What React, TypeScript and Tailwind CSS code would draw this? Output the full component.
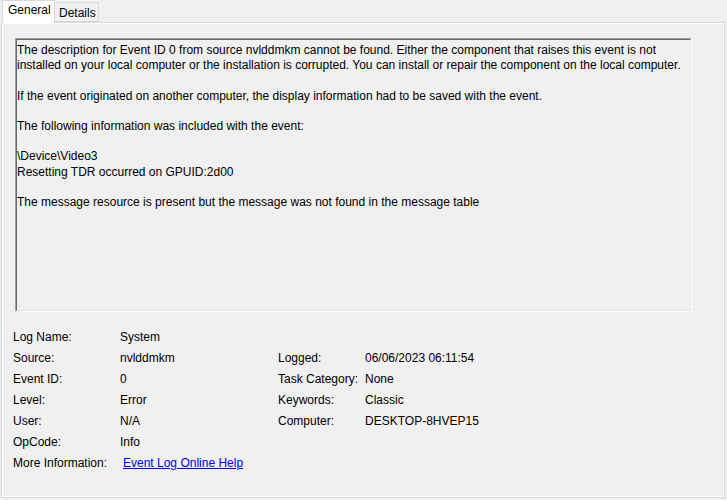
import React from 'react'

const font = { fontFamily: '"Segoe UI", "Liberation Sans", Arial, sans-serif' }

const messageLines = [
	'The description for Event ID 0 from source nvlddmkm cannot be found. Either the component that raises this event is not',
	'installed on your local computer or the installation is corrupted. You can install or repair the component on the local computer.',
	'',
	'If the event originated on another computer, the display information had to be saved with the event.',
	'',
	'The following information was included with the event:',
	'',
	'\\Device\\Video3',
	'Resetting TDR occurred on GPUID:2d00',
	'',
	'The message resource is present but the message was not found in the message table',
]

const rows: [string, React.ReactNode, string, string][] = [
	['Log Name:', 'System', '', ''],
	['Source:', 'nvlddmkm', 'Logged:', '06/06/2023 06:11:54'],
	['Event ID:', '0', 'Task Category:', 'None'],
	['Level:', 'Error', 'Keywords:', 'Classic'],
	['User:', 'N/A', 'Computer:', 'DESKTOP-8HVEP15'],
	['OpCode:', 'Info', '', ''],
]

export default function App() {
	return (
		<div className="w-[727px] h-[500px] bg-[#f0f0f0] text-[12px] text-black overflow-hidden" style={font}>
			{/* Tabs */}
			<div className="flex items-end h-[23px] pl-[2px] relative z-10">
				<div className="h-[23px] w-[53px] bg-white border border-b-0 border-[#d9d9d9] pl-[5px] pt-[2px] leading-[15px]">
					General
				</div>
				<div className="h-[20px] w-[44px] bg-[#f0f0f0] border border-l-0 border-[#d9d9d9] pl-[4px] pt-[3px] leading-[15px] mb-[1px]">
					Details
				</div>
			</div>

			{/* Panel */}
			<div className="ml-[1px] -mt-px w-[724px] h-[476px] border border-[#d9d9d9]">
				<div className="h-full border border-white bg-[#f0f0f0] pl-[12px] pt-[14px]">
					{/* Description box */}
					<div className="w-[677px] h-[274px] border border-t-[#a0a0a0] border-l-[#a0a0a0] border-r-white border-b-white">
						<div className="h-full border border-t-[#696969] border-l-[#696969] border-r-[#e3e3e3] border-b-[#e3e3e3] pt-[3px] leading-[15.2px] whitespace-pre">
							{messageLines.map((line, i) => (
								<div key={i} className="h-[15.2px]">
									{line}
								</div>
							))}
						</div>
					</div>

					{/* Event properties */}
					<div className="mt-[15px] -ml-[2px] grid grid-cols-[107px_158px_87px_1fr] leading-[21px]">
						{rows.map(([l1, v1, l2, v2]) => (
							<React.Fragment key={l1}>
								<div className="h-[21px]">{l1}</div>
								<div className="h-[21px]">{v1}</div>
								<div className="h-[21px]">{l2}</div>
								<div className="h-[21px]">{v2}</div>
							</React.Fragment>
						))}
						<div className="h-[21px]">More Information:</div>
						<div className="h-[21px] col-span-3 pl-[3px]">
							<a href="#" className="text-[#0000ff] underline">
								Event Log Online Help
							</a>
						</div>
					</div>
				</div>
			</div>
		</div>
	)
}
